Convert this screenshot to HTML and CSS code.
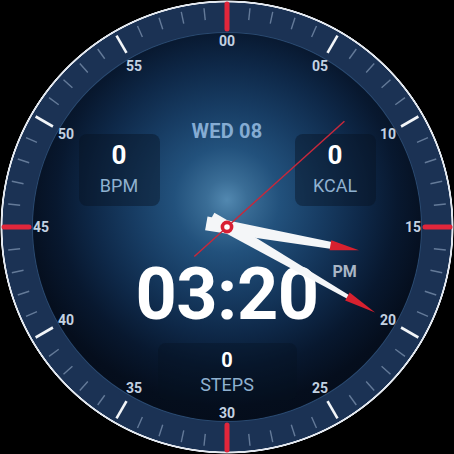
FILE: index.html
```html
<!DOCTYPE html>
<html lang="en">
<head>
<meta charset="utf-8">
<title>Watch face</title>
<link rel="stylesheet" href="styles.css">
</head>
<body>
<div class="watch">
  <div class="face">
    <div class="top-row">
      <div class="stat">
        <span class="stat-value">0</span>
        <span class="stat-label">BPM</span>
      </div>
      <div class="date">WED 08</div>
      <div class="stat">
        <span class="stat-value">0</span>
        <span class="stat-label">KCAL</span>
      </div>
    </div>
    <div class="time">03:20<span class="ampm">PM</span></div>
    <div class="stat stat-wide">
      <span class="stat-value small">0</span>
      <span class="stat-label">STEPS</span>
    </div>
  </div>
  <svg class="overlay" width="454" height="454" viewBox="0 0 454 454">
    <g class="minor">
      <line x1="227" y1="7" x2="227" y2="19" transform="rotate(6 227 227)"/>
      <line x1="227" y1="7" x2="227" y2="19" transform="rotate(12 227 227)"/>
      <line x1="227" y1="7" x2="227" y2="19" transform="rotate(18 227 227)"/>
      <line x1="227" y1="7" x2="227" y2="19" transform="rotate(24 227 227)"/>
      <line x1="227" y1="7" x2="227" y2="19" transform="rotate(36 227 227)"/>
      <line x1="227" y1="7" x2="227" y2="19" transform="rotate(42 227 227)"/>
      <line x1="227" y1="7" x2="227" y2="19" transform="rotate(48 227 227)"/>
      <line x1="227" y1="7" x2="227" y2="19" transform="rotate(54 227 227)"/>
      <line x1="227" y1="7" x2="227" y2="19" transform="rotate(66 227 227)"/>
      <line x1="227" y1="7" x2="227" y2="19" transform="rotate(72 227 227)"/>
      <line x1="227" y1="7" x2="227" y2="19" transform="rotate(78 227 227)"/>
      <line x1="227" y1="7" x2="227" y2="19" transform="rotate(84 227 227)"/>
      <line x1="227" y1="7" x2="227" y2="19" transform="rotate(96 227 227)"/>
      <line x1="227" y1="7" x2="227" y2="19" transform="rotate(102 227 227)"/>
      <line x1="227" y1="7" x2="227" y2="19" transform="rotate(108 227 227)"/>
      <line x1="227" y1="7" x2="227" y2="19" transform="rotate(114 227 227)"/>
      <line x1="227" y1="7" x2="227" y2="19" transform="rotate(126 227 227)"/>
      <line x1="227" y1="7" x2="227" y2="19" transform="rotate(132 227 227)"/>
      <line x1="227" y1="7" x2="227" y2="19" transform="rotate(138 227 227)"/>
      <line x1="227" y1="7" x2="227" y2="19" transform="rotate(144 227 227)"/>
      <line x1="227" y1="7" x2="227" y2="19" transform="rotate(156 227 227)"/>
      <line x1="227" y1="7" x2="227" y2="19" transform="rotate(162 227 227)"/>
      <line x1="227" y1="7" x2="227" y2="19" transform="rotate(168 227 227)"/>
      <line x1="227" y1="7" x2="227" y2="19" transform="rotate(174 227 227)"/>
      <line x1="227" y1="7" x2="227" y2="19" transform="rotate(186 227 227)"/>
      <line x1="227" y1="7" x2="227" y2="19" transform="rotate(192 227 227)"/>
      <line x1="227" y1="7" x2="227" y2="19" transform="rotate(198 227 227)"/>
      <line x1="227" y1="7" x2="227" y2="19" transform="rotate(204 227 227)"/>
      <line x1="227" y1="7" x2="227" y2="19" transform="rotate(216 227 227)"/>
      <line x1="227" y1="7" x2="227" y2="19" transform="rotate(222 227 227)"/>
      <line x1="227" y1="7" x2="227" y2="19" transform="rotate(228 227 227)"/>
      <line x1="227" y1="7" x2="227" y2="19" transform="rotate(234 227 227)"/>
      <line x1="227" y1="7" x2="227" y2="19" transform="rotate(246 227 227)"/>
      <line x1="227" y1="7" x2="227" y2="19" transform="rotate(252 227 227)"/>
      <line x1="227" y1="7" x2="227" y2="19" transform="rotate(258 227 227)"/>
      <line x1="227" y1="7" x2="227" y2="19" transform="rotate(264 227 227)"/>
      <line x1="227" y1="7" x2="227" y2="19" transform="rotate(276 227 227)"/>
      <line x1="227" y1="7" x2="227" y2="19" transform="rotate(282 227 227)"/>
      <line x1="227" y1="7" x2="227" y2="19" transform="rotate(288 227 227)"/>
      <line x1="227" y1="7" x2="227" y2="19" transform="rotate(294 227 227)"/>
      <line x1="227" y1="7" x2="227" y2="19" transform="rotate(306 227 227)"/>
      <line x1="227" y1="7" x2="227" y2="19" transform="rotate(312 227 227)"/>
      <line x1="227" y1="7" x2="227" y2="19" transform="rotate(318 227 227)"/>
      <line x1="227" y1="7" x2="227" y2="19" transform="rotate(324 227 227)"/>
      <line x1="227" y1="7" x2="227" y2="19" transform="rotate(336 227 227)"/>
      <line x1="227" y1="7" x2="227" y2="19" transform="rotate(342 227 227)"/>
      <line x1="227" y1="7" x2="227" y2="19" transform="rotate(348 227 227)"/>
      <line x1="227" y1="7" x2="227" y2="19" transform="rotate(354 227 227)"/>
    </g>
    <g class="major">
      <line x1="227" y1="6" x2="227" y2="26" transform="rotate(30 227 227)"/>
      <line x1="227" y1="6" x2="227" y2="26" transform="rotate(60 227 227)"/>
      <line x1="227" y1="6" x2="227" y2="26" transform="rotate(120 227 227)"/>
      <line x1="227" y1="6" x2="227" y2="26" transform="rotate(150 227 227)"/>
      <line x1="227" y1="6" x2="227" y2="26" transform="rotate(210 227 227)"/>
      <line x1="227" y1="6" x2="227" y2="26" transform="rotate(240 227 227)"/>
      <line x1="227" y1="6" x2="227" y2="26" transform="rotate(300 227 227)"/>
      <line x1="227" y1="6" x2="227" y2="26" transform="rotate(330 227 227)"/>
    </g>
    <g class="quarter">
      <line x1="227" y1="4" x2="227" y2="29"/>
      <line x1="227" y1="4" x2="227" y2="29" transform="rotate(90 227 227)"/>
      <line x1="227" y1="4" x2="227" y2="29" transform="rotate(180 227 227)"/>
      <line x1="227" y1="4" x2="227" y2="29" transform="rotate(270 227 227)"/>
    </g>
    <g class="nums">
      <text x="227" y="46">00</text>
      <text x="320" y="71">05</text>
      <text x="388" y="139">10</text>
      <text x="413" y="232">15</text>
      <text x="388" y="325">20</text>
      <text x="320" y="393">25</text>
      <text x="227" y="418">30</text>
      <text x="134" y="393">35</text>
      <text x="66" y="325">40</text>
      <text x="41" y="232">45</text>
      <text x="66" y="139">50</text>
      <text x="134" y="71">55</text>
    </g>
    <g class="hand" transform="rotate(100 227 227)">
      <polygon class="hand-body" points="220,248 234,248 233.5,227 230.5,120 223.5,120 220.5,227"/>
      <polygon class="hand-tip" points="222,122 232,122 227,93"/>
    </g>
    <g class="hand" transform="rotate(120 227 227)">
      <polygon class="hand-body" points="221,245 233,245 233,227 229,86 225,86 221,227"/>
      <polygon class="hand-tip" points="222.5,88 231.5,88 227,56"/>
    </g>
    <line class="second" x1="227" y1="271" x2="227" y2="69" transform="rotate(48 227 227)"/>
    <circle class="pivot" cx="227" cy="227" r="4.6"/>
  </svg>
</div>
</body>
</html>
```

FILE: styles.css
```css
html, body {
  margin: 0;
  padding: 0;
  background: #000;
}

body {
  width: 454px;
  height: 454px;
  overflow: hidden;
  font-family: Roboto, "Liberation Sans", sans-serif;
}

.watch {
  position: relative;
  width: 454px;
  height: 454px;
  border-radius: 50%;
  background: radial-gradient(circle at 50% 50%, #1b3254 0, #1b3254 224.2px, #e3e8ef 224.8px, #e3e8ef 226.2px, #000 226.8px);
  display: flex;
  align-items: center;
  justify-content: center;
}

.face {
  width: 388px;
  height: 388px;
  box-sizing: border-box;
  border-radius: 50%;
  background: radial-gradient(circle at 50% 43%, #5288b0 0, #3a6d96 7%, #22517c 18%, #173c63 32%, #0e2848 46%, #08182f 58%, #050e1d 70%, #030913 100%);
  box-shadow: 0 0 0 1px #2a4a70;
  padding-top: 86px;
  display: flex;
  flex-direction: column;
  align-items: center;
}

.top-row {
  width: 297px;
  display: flex;
  justify-content: space-between;
  align-items: flex-start;
}

.date {
  font-size: 20px;
  line-height: 24px;
  font-weight: 700;
  color: #85acd3;
  letter-spacing: 0.2px;
}

.stat {
  width: 81px;
  height: 72px;
  margin-top: 15px;
  box-sizing: border-box;
  padding-top: 8px;
  border-radius: 8px;
  background: rgba(6, 16, 32, 0.42);
  display: flex;
  flex-direction: column;
  align-items: center;
  gap: 8px;
}

.stat-value {
  font-size: 26px;
  line-height: 26px;
  font-weight: 700;
  color: #fff;
}

.stat-value.small {
  font-size: 20px;
  line-height: 20px;
}

.stat-label {
  font-size: 18px;
  line-height: 20px;
  color: #8fb1d0;
}

.stat-wide {
  width: 139px;
  height: 57px;
  margin-top: 12px;
  padding-top: 7px;
  gap: 5px;
  background: rgba(6, 16, 32, 0.35);
}

.time {
  position: relative;
  margin-top: 53px;
  font-size: 72px;
  line-height: 72px;
  font-weight: 700;
  color: #fff;
  letter-spacing: -0.5px;
}

.ampm {
  position: absolute;
  left: calc(100% + 14px);
  top: 5px;
  font-size: 16px;
  line-height: 16px;
  font-weight: 700;
  color: #a9b6c5;
  letter-spacing: 0;
}

.overlay {
  position: absolute;
  left: 0;
  top: 0;
}

.minor line {
  stroke: #7d93b0;
  stroke-width: 1.4;
  opacity: 0.75;
}

.major line {
  stroke: #f2f5f8;
  stroke-width: 2.6;
}

.quarter line {
  stroke: #e1263b;
  stroke-width: 5;
  stroke-linecap: round;
}

.nums text {
  font-family: Roboto, "Liberation Sans", sans-serif;
  font-size: 14px;
  font-weight: 700;
  fill: #c3d2e2;
  text-anchor: middle;
}

.hand-body {
  fill: #f4f6f8;
}

.hand-tip {
  fill: #d8212f;
}

.second {
  stroke: #c7283b;
  stroke-width: 1.5;
}

.pivot {
  fill: #fff;
  stroke: #d81f33;
  stroke-width: 3.6;
}
```
